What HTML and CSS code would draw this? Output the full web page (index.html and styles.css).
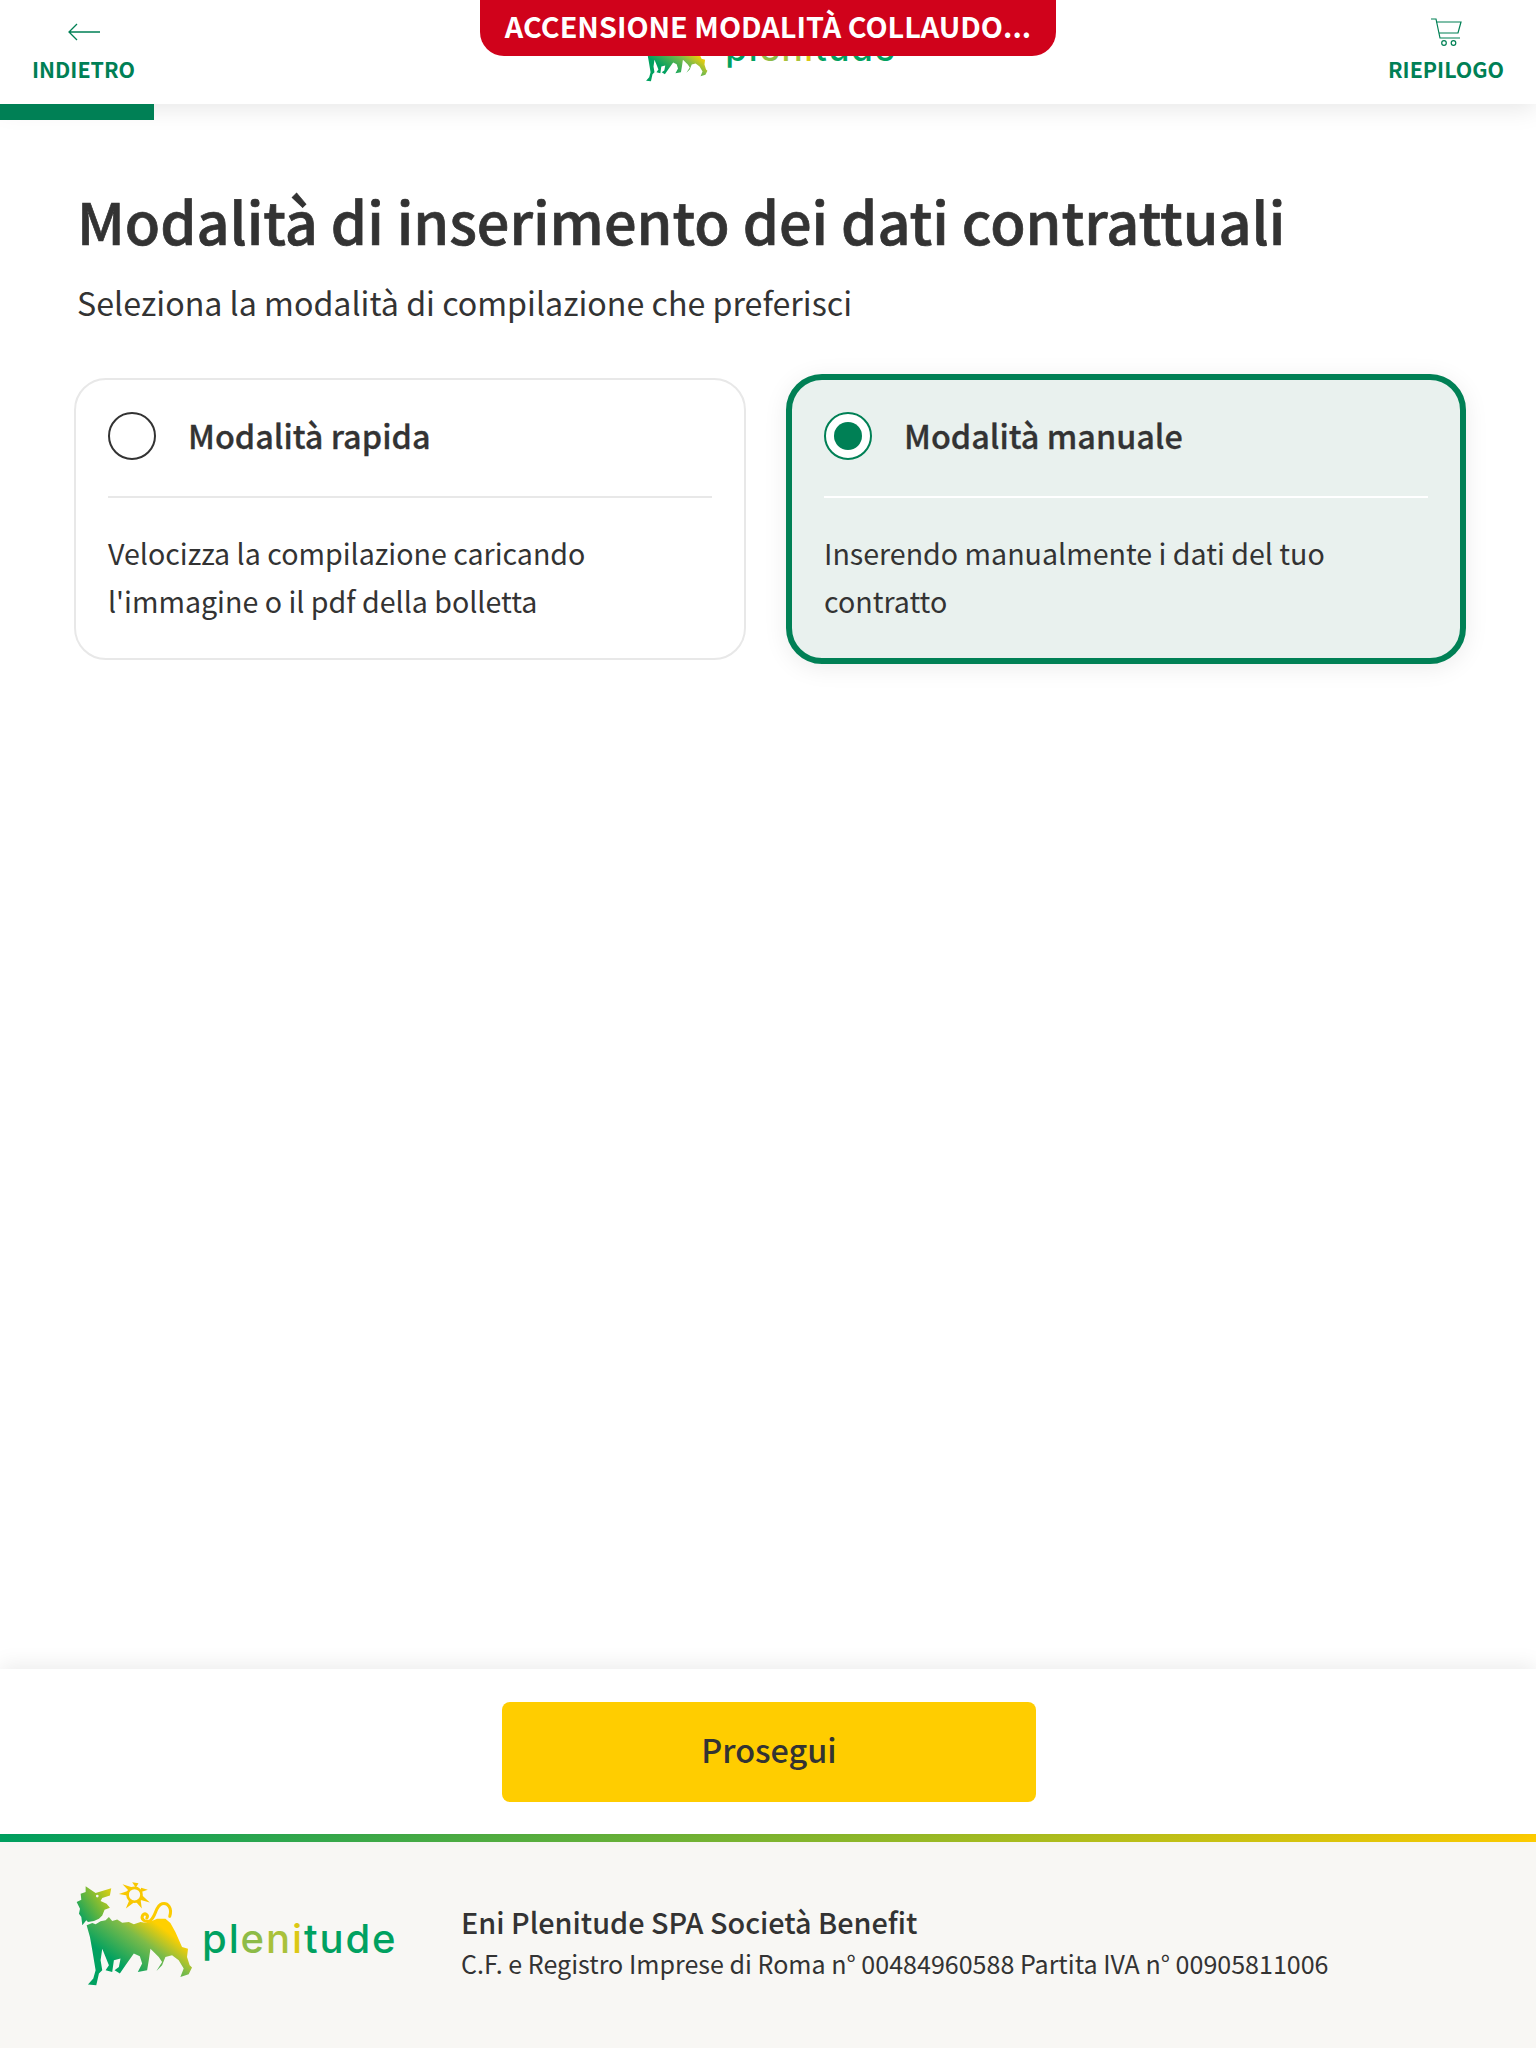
FILE: index.html
```html
<!DOCTYPE html>
<html lang="it">
<head>
    <meta charset="UTF-8">
    <meta name="viewport" content="width=device-width, initial-scale=1.0">
    <title>Modalità di inserimento</title>
    <link rel="stylesheet" href="styles.css">
</head>
<body>
    <svg class="defs" width="0" height="0" aria-hidden="true">
        <defs>
            <linearGradient id="dogFill" gradientUnits="userSpaceOnUse" x1="200" y1="340" x2="300" y2="205">
                <stop offset="0" stop-color="#00a160"/>
                <stop offset="0.6" stop-color="#7dbb48"/>
                <stop offset="1" stop-color="#ffd000"/>
            </linearGradient>
            <linearGradient id="headFill" gradientUnits="userSpaceOnUse" x1="85" y1="190" x2="185" y2="120">
                <stop offset="0" stop-color="#14a45c"/>
                <stop offset="1" stop-color="#e0d010"/>
            </linearGradient>
            <symbol id="dog" viewBox="76 95 352 312">
                <path fill="url(#headFill)" d="M105 107 L135 128 L182 113 L178 135 L155 143 L150 152 L168 160 L178 172 L162 178 L155 195 L145 205 L130 212 L112 215 L107 210 L95 225 L92 200 L85 190 L88 175 L78 155 L92 148 L90 130 L105 125 Z"/>
                <circle cx="140" cy="137" r="4" fill="#f7f6f3"/>
                <path fill="url(#dogFill)" d="M108 225 L125 218 L135 222 L150 213 L165 210 L175 200 L185 212 L200 207 L215 217 L235 215 L250 222 L270 215 L290 218 L320 205 L345 205 L360 218 L375 245 L395 290 L413 295 L410 320 L418 345 L425 352 L415 372 L390 380 L400 355 L385 330 L365 315 L345 320 L335 345 L318 362 L335 335 L325 320 L300 295 L295 330 L290 360 L262 365 L275 340 L268 318 L250 310 L225 345 L208 370 L192 360 L205 350 L210 325 L190 330 L185 365 L165 360 L175 345 L165 320 L155 295 L150 330 L155 360 L145 370 L137 405 L112 403 L128 385 L135 360 L125 300 L118 260 Z"/>
                <path fill="none" stroke="#fbcb00" stroke-width="9" stroke-linecap="round" d="M300 212 C282 218 270 205 277 194 C284 186 295 194 289 203 M300 210 C318 196 315 165 335 160 C352 156 366 172 358 198"/>
                <circle cx="252" cy="133" r="21" fill="none" stroke="#f8c800" stroke-width="8"/>
                <path fill="#f8c800" d="M205 131 L236 120 L234 136 Z M216 101 L244 110 L234 120 Z M245 95 L264 98 L256 112 Z M292 118 L268 126 L272 112 Z M298 156 L268 148 L274 134 Z M274 174 L256 154 L270 146 Z M226 174 L236 150 L250 156 Z"/>
            </symbol>
        </defs>
    </svg>

    <div class="page">
        <header class="topbar">
            <a class="nav-item">
                <svg class="nav-icon" width="32" height="18" viewBox="0 0 32 18">
                    <path d="M32 9H1M9 1 1 9l8 8" fill="none" stroke="#008055" stroke-width="1.3"/>
                </svg>
                <span>INDIETRO</span>
            </a>
            <div class="logo logo-small">
                <svg class="logo-dog" width="69" height="62"><use href="#dog"/></svg>
                <span class="logo-word">pl<span class="w-e">e</span><span class="w-n">n</span><span class="w-i">i</span>tude</span>
            </div>
            <a class="nav-item nav-right">
                <svg class="nav-icon" width="32" height="28" viewBox="0 0 32 28">
                    <path d="M0 1h5l4 19h20M5 4h25l-3 11H8" fill="none" stroke="#008055" stroke-width="1.2"/>
                    <circle cx="13" cy="25" r="2.3" fill="none" stroke="#008055" stroke-width="1.2"/>
                    <circle cx="22.5" cy="25" r="2.3" fill="none" stroke="#008055" stroke-width="1.2"/>
                </svg>
                <span>RIEPILOGO</span>
            </a>
        </header>
        <div class="banner">ACCENSIONE MODALITÀ COLLAUDO...</div>
        <div class="progress"><div class="progress-fill"></div></div>

        <main class="content">
            <h1>Modalità di inserimento dei dati contrattuali</h1>
            <p class="subtitle">Seleziona la modalità di compilazione che preferisci</p>

            <div class="options">
                <div class="card">
                    <div class="card-head">
                        <span class="radio"></span>
                        <span class="card-title">Modalità rapida</span>
                    </div>
                    <p class="card-text">Velocizza la compilazione caricando<br>l'immagine o il pdf della bolletta</p>
                </div>
                <div class="card selected">
                    <div class="card-head">
                        <span class="radio"></span>
                        <span class="card-title">Modalità manuale</span>
                    </div>
                    <p class="card-text">Inserendo manualmente i dati del tuo<br>contratto</p>
                </div>
            </div>
        </main>

        <div class="actions">
            <button class="next-btn">Prosegui</button>
        </div>
        <div class="gradient-line"></div>
        <footer class="footer">
            <div class="logo logo-large">
                <svg class="logo-dog" width="117" height="104"><use href="#dog"/></svg>
                <span class="logo-word">pl<span class="w-e">e</span><span class="w-n">n</span><span class="w-i">i</span>tude</span>
            </div>
            <div class="footer-text">
                <div class="footer-name">Eni Plenitude SPA Società Benefit</div>
                <div class="footer-info">C.F. e Registro Imprese di Roma n° 00484960588 Partita IVA n° 00905811006</div>
            </div>
        </footer>
    </div>
</body>
</html>
```

FILE: styles.css
```css
* {
    box-sizing: border-box;
}
body {
    font-family: "Noto Sans CJK SC", "Noto Sans", sans-serif;
    margin: 0;
    background: white;
    color: #333;
}
.defs {
    position: absolute;
}
.page {
    display: flex;
    flex-direction: column;
    height: 100vh;
    position: relative;
    overflow: hidden;
}
.topbar {
    display: grid;
    grid-template-columns: 1fr auto 1fr;
    align-items: flex-start;
    height: 104px;
    padding: 0 32px;
    background: white;
    box-shadow: 0 4px 24px rgba(0, 0, 0, 0.1);
    position: relative;
}
.logo {
    display: flex;
    align-items: flex-end;
}
.logo-dog {
    flex-shrink: 0;
}
.logo-word {
    font-family: Inter, "Noto Sans", sans-serif;
    font-weight: 500;
    line-height: 1;
    color: #00a160;
}
.w-e {
    color: #8dbb47;
}
.w-n {
    color: #a9c13a;
}
.w-i {
    color: #dcc814;
}
.logo-small {
    margin-top: 20px;
    height: 62px;
}
.logo-small .logo-word {
    margin-left: 17px;
    padding-bottom: 16px;
    font-size: 35.4px;
    letter-spacing: 1.5px;
}
.logo-large {
    width: 322px;
    height: 104px;
    flex-shrink: 0;
}
.logo-large .logo-word {
    margin-left: 9px;
    padding-bottom: 27.5px;
    font-size: 40px;
    letter-spacing: 1.9px;
}
.nav-item {
    display: flex;
    flex-direction: column;
    align-items: center;
    justify-self: start;
    color: #008055;
    font-size: 21.4px;
    font-weight: 700;
    line-height: 30px;
}
.nav-item .nav-icon {
    margin-top: 23px;
    margin-bottom: 13px;
}
.nav-right {
    justify-self: end;
}
.nav-right .nav-icon {
    margin-top: 18px;
    margin-bottom: 8px;
    margin-left: 2px;
}
.banner {
    position: absolute;
    top: 0;
    left: 480px;
    width: 576px;
    height: 56px;
    background: #d0021b;
    color: white;
    border-radius: 0 0 24px 24px;
    font-size: 28.8px;
    font-weight: 700;
    line-height: 52px;
    text-align: center;
    white-space: nowrap;
}
.progress {
    height: 16px;
}
.progress-fill {
    width: 154px;
    height: 100%;
    background: #008055;
    position: relative;
}
.content {
    flex: 1;
    padding: 62px 74px 0;
}
h1 {
    margin: 0 0 0 3px;
    font-size: 57.6px;
    font-weight: 500;
    line-height: 76px;
    -webkit-text-stroke: 0.7px #333;
}
.subtitle {
    margin: 20px 0 52px 3px;
    font-size: 32.2px;
    line-height: 48px;
}
.options {
    display: grid;
    grid-template-columns: 672px 672px;
    gap: 44px;
}
.card {
    background: white;
    border: 2px solid #e8e8e8;
    border-radius: 32px;
    padding: 32px 32px 33px;
}
.card.selected {
    margin: -4px;
    border: 6px solid #008055;
    border-radius: 36px;
    background: #e9f1ee;
    box-shadow: 0 4px 24px rgba(0, 0, 0, 0.08);
}
.card-head {
    display: flex;
    align-items: center;
    gap: 32px;
    padding-bottom: 36px;
    border-bottom: 2px solid #e8e8e8;
}
.selected .card-head {
    border-bottom-color: white;
}
.radio {
    width: 48px;
    height: 48px;
    border: 2px solid #333;
    border-radius: 50%;
    background: white;
    flex-shrink: 0;
    display: flex;
    align-items: center;
    justify-content: center;
}
.selected .radio {
    border-color: #008055;
}
.selected .radio::after {
    content: "";
    width: 28px;
    height: 28px;
    border-radius: 50%;
    background: #008055;
}
.card-title {
    margin-bottom: 3px;
    font-size: 32.4px;
    font-weight: 500;
    line-height: 42px;
    -webkit-text-stroke: 0.3px #333;
}
.card-text {
    margin: 31px 0 0;
    font-size: 28.6px;
    line-height: 48px;
}
.actions {
    display: flex;
    justify-content: center;
    height: 165px;
    padding-top: 33px;
    padding-left: 2px;
    background: white;
    box-shadow: 0 -4px 20px rgba(0, 0, 0, 0.08);
    position: relative;
}
.next-btn {
    width: 534px;
    height: 100px;
    padding-bottom: 8px;
    background: #ffcd00;
    color: #333;
    border: none;
    border-radius: 8px;
    font-family: inherit;
    font-size: 32.4px;
    font-weight: 500;
}
.gradient-line {
    height: 8px;
    background: linear-gradient(to right, #00a160, #ffcd00);
}
.footer {
    display: flex;
    align-items: flex-start;
    height: 206px;
    padding: 40px 76px 0;
    background: #f8f7f4;
}
.footer-text {
    margin-left: 63px;
    margin-top: 18px;
}
.footer-name {
    font-size: 28.8px;
    font-weight: 500;
    line-height: 44px;
}
.footer-info {
    font-size: 25.05px;
    line-height: 39px;
}
```
